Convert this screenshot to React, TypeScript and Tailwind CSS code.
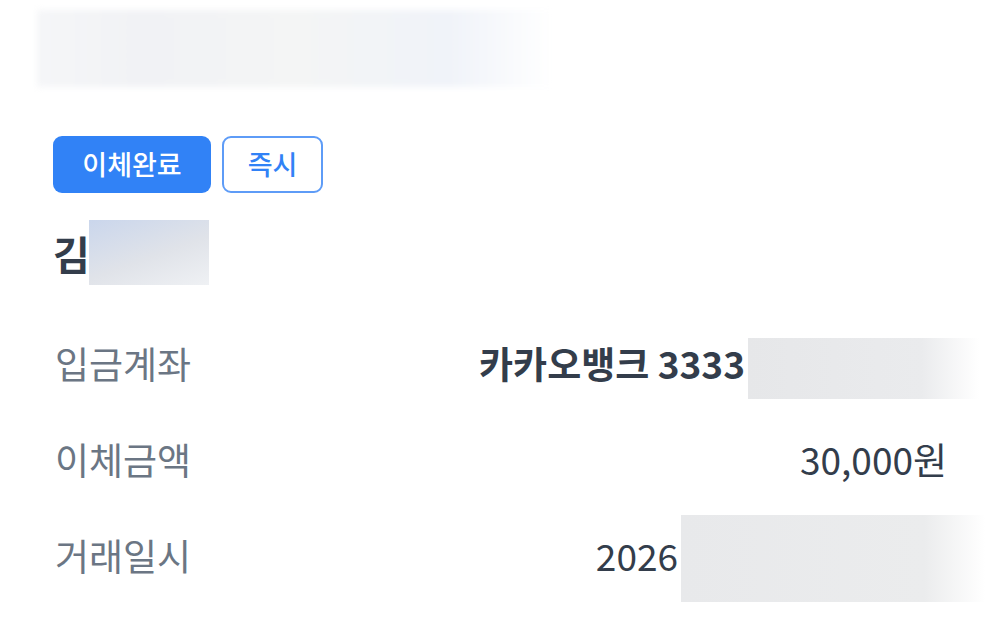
import React from 'react';

const rows = [
  { label: '입금계좌', value: '카카오뱅크 3333', bold: true, mask: 'account' },
  { label: '이체금액', value: '30,000원', bold: false, mask: null },
  { label: '거래일시', value: '2026', bold: false, mask: 'date' },
];

export default function App() {
  return (
    <div className="w-[1000px] h-[623px] bg-white overflow-hidden font-['Noto_Sans_CJK_KR','Noto_Sans',sans-serif]">
      {/* blurred title */}
      <div className="ml-[37px] mt-[10px] h-[77px] w-[515px] blur-[3px] bg-[linear-gradient(90deg,#f5f6f8_0%,#f1f2f5_20%,#f4f5f5_50%,#f0f3f9_80%,#ffffff_100%)]" />

      <div className="px-[53px]">
        {/* status badges */}
        <div className="mt-[49px] flex gap-[11px]">
          <span className="flex h-[57px] w-[158px] items-center justify-center rounded-[9px] bg-[#3182f6] text-[27px] font-medium text-white">
            이체완료
          </span>
          <span className="flex h-[57px] w-[101px] items-center justify-center rounded-[9px] border-2 border-[#5e9cf7] text-[27px] font-medium text-[#3182f6]">
            즉시
          </span>
        </div>

        {/* name */}
        <div className="mt-[27px] flex h-[65px] items-center">
          <span className="text-[40px] font-bold text-[#333d4b] leading-none">김</span>
          <div className="ml-[-1px] h-[65px] w-[120px] bg-[linear-gradient(160deg,#cad6ec_0%,#e0e3e9_55%,#eff1f4_100%)]" />
        </div>

        {/* details */}
        <div className="mt-[31px]">
          {rows.map((r) => (
            <div key={r.label} className="flex h-[96px] items-center justify-between">
              <span className="pl-[2px] text-[37px] text-[#6b7684]">{r.label}</span>
              <div className="flex items-center">
                <span className={`text-[37px] text-[#333d4b] ${r.bold ? 'font-bold' : 'font-normal'}`}>
                  {r.value}
                </span>
                {r.mask === 'account' && (
                  <div className="ml-[3px] mr-[-32px] mt-[8px] h-[61px] w-[231px] bg-[linear-gradient(90deg,#e6e7e9_0%,#eaebed_75%,#ffffff_100%)]" />
                )}
                {r.mask === 'date' && (
                  <div className="ml-[3px] mr-[-38px] mt-[4px] h-[87px] w-[304px] bg-[linear-gradient(90deg,#e8e9eb_0%,#ebeced_80%,#ffffff_100%)]" />
                )}
              </div>
            </div>
          ))}
        </div>
      </div>
    </div>
  );
}
